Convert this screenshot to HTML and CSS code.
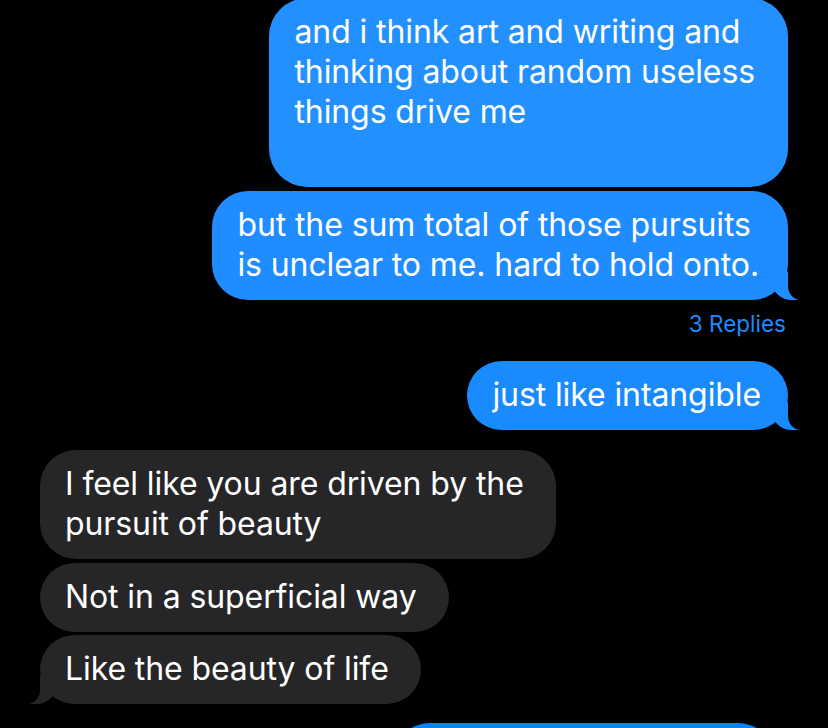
FILE: index.html
```html
<!DOCTYPE html>
<html lang="en">
<head>
<meta charset="utf-8">
<title>Messages</title>
<link rel="stylesheet" href="styles.css">
</head>
<body>
<main class="thread">
  <div class="bubble out first">and i think art and writing and<br>thinking about random useless<br>things drive me<br>&nbsp;</div>
  <div class="bubble out tail wide">but the sum total of those pursuits<br>is unclear to me. hard to hold onto.</div>
  <div class="replies">3 Replies</div>
  <div class="bubble out tail solo">just like intangible</div>
  <div class="bubble in group-start">I feel like you are driven by the<br>pursuit of beauty</div>
  <div class="bubble in">Not in a superficial way</div>
  <div class="bubble in tail">Like the beauty of life</div>
  <div class="bubble out next">&nbsp;</div>
</main>
</body>
</html>
```

FILE: styles.css
```css
html, body {
  margin: 0;
  padding: 0;
  background: #000;
  height: 100%;
  overflow: hidden;
}

.thread {
  display: flex;
  flex-direction: column;
  gap: 3.5px;
  padding: 0 40px;
  font-family: Inter, "Noto Sans", sans-serif;
}

.bubble {
  position: relative;
  font-size: 32px;
  line-height: 40px;
  letter-spacing: -0.1px;
  color: #fff;
  padding: 14px 27px 15px 25px;
  border-radius: 36px;
  max-width: 620px;
  white-space: nowrap;
}

.out {
  align-self: flex-end;
  background: #1f8cff;
}

.in {
  align-self: flex-start;
  background: #262629;
  padding-right: 32px;
}

.first {
  margin-top: -2px;
  background: #2290ff;
  border-radius: 38px;
  padding-right: 33px;
}

.wide {
  padding-right: 29px;
}

.solo {
  margin-top: 20px;
  background: #1a8aff;
}

.group-start {
  margin-top: 17px;
}

.next {
  margin-top: 15px;
  width: 326px;
  margin-right: 15px;
  background: #0a84ff;
}

.replies {
  align-self: flex-end;
  font-size: 22.5px;
  line-height: 26px;
  color: #1b8cff;
  margin-top: 8px;
  margin-right: 2px;
}

.out.tail::before,
.out.tail::after,
.in.tail::before,
.in.tail::after {
  content: "";
  position: absolute;
  bottom: 0;
  height: 28px;
}

.out.tail::before {
  right: -10px;
  width: 26px;
  background: inherit;
  border-bottom-left-radius: 20px 18px;
}

.out.tail::after {
  right: -16px;
  width: 16px;
  background: #000;
  border-bottom-left-radius: 13px 14px;
}

.in.tail::before {
  left: -10px;
  width: 26px;
  background: inherit;
  border-bottom-right-radius: 20px 18px;
}

.in.tail::after {
  left: -16px;
  width: 16px;
  background: #000;
  border-bottom-right-radius: 13px 14px;
}

.bubble.next {
  width: 326px;
  padding-left: 26px;
  padding-right: 26px;
}
```
